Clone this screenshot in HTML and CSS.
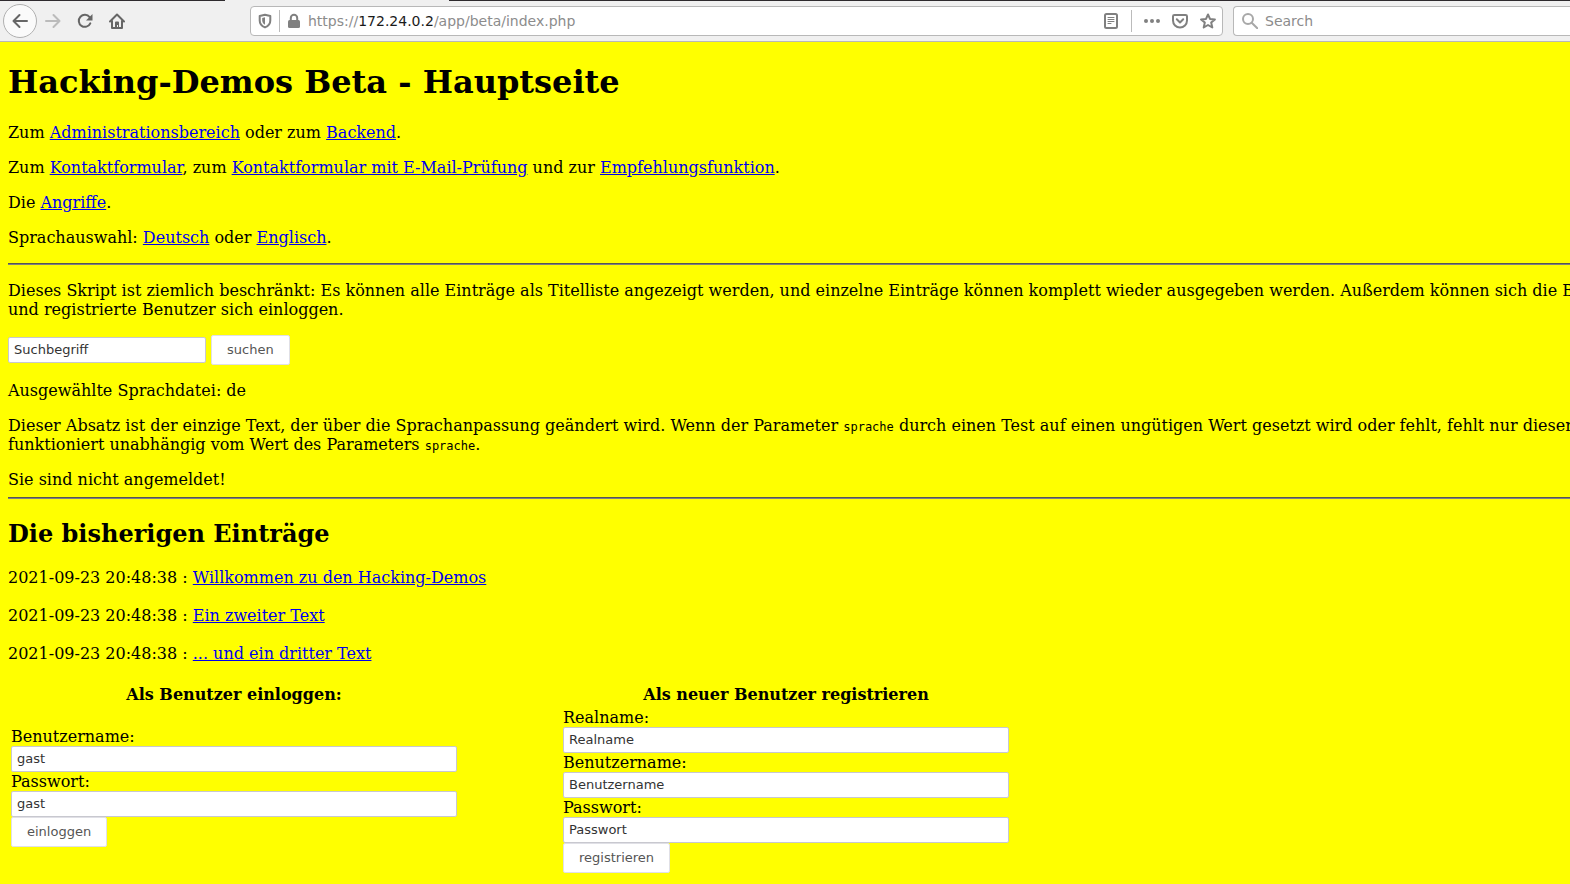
FILE: index.html
```html
<!DOCTYPE html>
<html lang="de">
<head>
<meta charset="utf-8">
<title>Hacking-Demos Beta - Hauptseite</title>
<link rel="stylesheet" href="styles.css">
</head>
<body>
<header class="browser">
  <div class="tabstrip"><span class="tabstrip-left"></span><span class="tabstrip-right"></span></div>
  <div class="toolbar">
    <nav class="nav">
      <button class="nav-button back" type="button" aria-label="Back"><svg viewBox="0 0 16 16"><path d="M15 8H1.500M7.500 2L1.500 8l6 6"/></svg></button>
      <button class="nav-button forward" type="button" aria-label="Forward"><svg viewBox="0 0 16 16"><path d="M1 8h13.500M8.500 2l6 6-6 6"/></svg></button>
      <button class="nav-button" type="button" aria-label="Reload"><svg viewBox="0 0 16 16"><path d="M13.300 10.300A6 6 0 1 1 12.600 4.200"/><path class="solid" d="M15.500 1v6.500H9z"/></svg></button>
      <button class="nav-button" type="button" aria-label="Home"><svg viewBox="0 0 16 16"><path d="M1 8.500L8 1.500l7 7M3 8v7h10V8"/><path class="solid" d="M6 15V9.500a1 1 0 0 1 1-1h2a1 1 0 0 1 1 1V15H9v-3H8v3z"/></svg></button>
    </nav>
    <div class="urlbar">
      <svg class="icon shield" viewBox="0 0 16 16"><path d="M8 1.800l5.300 1.200v4.500c0 3.200-2.300 5.800-5.300 6.900-3-1.100-5.300-3.700-5.300-6.900V3z"/><path class="solid" d="M8 4.300v7.500C6.300 10.800 5.200 9.300 5.200 7.300V4.900z"/></svg>
      <span class="separator"></span>
      <svg class="icon" viewBox="0 0 16 16"><path d="M4.800 8V5a3.200 3.200 0 0 1 6.400 0v3"/><rect class="solid" x="2" y="7" width="12" height="8" rx="1.500"/></svg>
      <span class="url">https://<span class="host">172.24.0.2</span>/app/beta/index.php</span>
      <svg class="icon" viewBox="0 0 16 16"><rect x="2" y="1" width="12" height="14" rx="1.500"/><path class="thin" d="M5 4.500h6M5 6.500h6M5 8.500h6M5 10.500h3"/></svg>
      <span class="separator wide"></span>
      <svg class="icon" viewBox="0 0 16 16"><circle class="solid" cx="2" cy="8" r="2"/><circle class="solid" cx="8" cy="8" r="2"/><circle class="solid" cx="14" cy="8" r="2"/></svg>
      <svg class="icon" viewBox="0 0 16 16"><path d="M2.500 2h11c.800 0 1.500.500 1.500 1.300V7.500a7 7 0 0 1-14 0V3.300C1 2.500 1.700 2 2.500 2z"/><path d="M4.800 6.300L8 9.500l3.200-3.200"/></svg>
      <svg class="icon" viewBox="0 0 16 16"><path d="M8 1.500l2 4.400 4.900.500-3.700 3.200 1.100 4.900L8 12l-4.300 2.500 1.100-4.900L1.100 6.400 6 5.900z"/></svg>
    </div>
    <div class="searchbar">
      <svg class="icon pale" viewBox="0 0 16 16"><circle cx="6" cy="6" r="5"/><path d="M9.700 9.700l5.600 5.600"/></svg>
      <input class="search-input" type="text" placeholder="Search" aria-label="Search">
    </div>
  </div>
</header>
<main class="page">
  <h1>Hacking-Demos Beta - Hauptseite</h1>
  <p>Zum <a href="#">Administrationsbereich</a> oder zum <a href="#">Backend</a>.</p>
  <p>Zum <a href="#">Kontaktformular</a>, zum <a href="#">Kontaktformular mit E-Mail-Prüfung</a> und zur <a href="#">Empfehlungsfunktion</a>.</p>
  <p>Die <a href="#">Angriffe</a>.</p>
  <p>Sprachauswahl: <a href="#">Deutsch</a> oder <a href="#">Englisch</a>.</p>
  <hr>
  <p>Dieses Skript ist ziemlich beschränkt: Es können alle Einträge als Titelliste angezeigt werden, und einzelne Einträge können komplett wieder ausgegeben werden. Außerdem können sich die Benutzer<br>und registrierte Benutzer sich einloggen.</p>
  <form class="search-form">
    <input class="field short" type="text" value="Suchbegriff" aria-label="Suchbegriff">
    <button class="submit" type="button">suchen</button>
  </form>
  <p>Ausgewählte Sprachdatei: de</p>
  <p>Dieser Absatz ist der einzige Text, der über die Sprachanpassung geändert wird. Wenn der Parameter <code>sprache</code> durch einen Test auf einen ungütigen Wert gesetzt wird oder fehlt, fehlt nur dieser<br>funktioniert unabhängig vom Wert des Parameters <code>sprache</code>.</p>
  <div>Sie sind nicht angemeldet!</div>
  <hr>
  <h2>Die bisherigen Einträge</h2>
  <div class="entries">
    <div>2021-09-23 20:48:38 : <a href="#">Willkommen zu den Hacking-Demos</a></div>
    <div>2021-09-23 20:48:38 : <a href="#">Ein zweiter Text</a></div>
    <div>2021-09-23 20:48:38 : <a href="#">... und ein dritter Text</a></div>
  </div>
  <div class="accounts">
    <form class="account login">
      <h3>Als Benutzer einloggen:</h3>
      <label for="login-name">Benutzername:</label>
      <input class="field" id="login-name" type="text" value="gast">
      <label for="login-pass">Passwort:</label>
      <input class="field" id="login-pass" type="text" value="gast">
      <button class="submit" type="button">einloggen</button>
    </form>
    <form class="account">
      <h3>Als neuer Benutzer registrieren</h3>
      <label for="reg-real">Realname:</label>
      <input class="field" id="reg-real" type="text" value="Realname">
      <label for="reg-name">Benutzername:</label>
      <input class="field" id="reg-name" type="text" value="Benutzername">
      <label for="reg-pass">Passwort:</label>
      <input class="field" id="reg-pass" type="text" value="Passwort">
      <button class="submit" type="button">registrieren</button>
    </form>
  </div>
</main>
</body>
</html>
```

FILE: styles.css
```css
* { box-sizing: border-box; }
html { background: #ffff00; }
body { margin: 0; overflow-x: hidden; color: #000; font: 16px/19px "DejaVu Serif", serif; }

/* Browser chrome */
.browser { background: #f0f0f0; border-bottom: 1px solid #b8b8b8; font-family: "DejaVu Sans", sans-serif; }
.tabstrip { display: flex; justify-content: space-between; height: 1px; }
.tabstrip-left { width: 225px; background: #2e2a2e; }
.tabstrip-right { width: calc(100% - 449px); background: #2e2a2e; }
.toolbar { display: flex; align-items: center; height: 40px; padding-left: 3px; }
.nav { display: flex; align-items: center; width: 247px; flex: none; }
.nav-button { display: flex; align-items: center; justify-content: center; width: 32px; height: 34px; padding: 0; border: 0; background: none; color: #666; }
.back { width: 34px; border: 1px solid #b0b0b0; border-radius: 50%; background: #fafafa; }
.forward { color: #bbb; }
svg { width: 16px; height: 16px; flex: none; fill: none; stroke: currentColor; stroke-width: 2; stroke-linejoin: round; stroke-linecap: round; }
.solid { fill: currentColor; stroke: none; }
.thin { stroke-width: 1; }
.icon { color: #808080; }
.pale { color: #a8a8a8; }
.urlbar, .searchbar { display: flex; align-items: center; height: 30px; background: #fff; border: 1px solid #b8b8b8; border-radius: 4px; font-size: 14px; }
.urlbar { flex: 1; min-width: 0; padding-left: 6px; }
.urlbar .icon { margin: 0 6px; }
.urlbar .shield { margin-left: 0; }
.separator { width: 1px; height: 22px; background: #bbb; }
.wide { margin: 0 6px; }
.url { flex: 1; min-width: 0; overflow: hidden; white-space: nowrap; color: #8c8c8c; }
.host { color: #1a1a1a; }
.searchbar { flex: none; width: 337px; margin-left: 10px; padding-left: 8px; border-right: 0; border-radius: 4px 0 0 4px; }
.search-input { flex: 1; min-width: 0; margin-left: 7px; padding: 0; border: 0; outline: 0; font: inherit; background: none; }
.search-input::placeholder { color: #8c8c8c; opacity: 1; }

/* Page */
.page { display: flow-root; padding: 0 0 10px 8px; white-space: nowrap; }
h1 { margin: 21px 0 22px; font-size: 32px; line-height: 38px; }
h2 { margin: 21px 0 20px; font-size: 24px; line-height: 28px; }
h3 { margin: 0 0 4px; font-size: 16px; line-height: 19px; text-align: center; }
p { margin: 16px 0; }
a { color: #0000ee; }
code { font: 12px "DejaVu Sans Mono", monospace; line-height: 1; }
hr { height: 2px; margin: 8px 0; border: 1px solid #808080; border-top-color: #555; border-width: 1px 0; }
.field { display: block; width: 100%; height: 26px; padding: 0 5px 2px; border: 1px solid #c8c8cf; border-radius: 2px; background: #fff; color: #333; font: 13px "DejaVu Sans", sans-serif; }
.short { width: 198px; }
.submit { height: 30px; padding: 0 15px 2px; border: 1px solid #e0e0e6; border-radius: 2px; background: #fff; color: #555; font: 13px "DejaVu Sans", sans-serif; }
.search-form { display: flex; align-items: center; gap: 5px; }
.entries { display: grid; gap: 19px; }
.accounts { display: flex; gap: 106px; margin: 22px 0 0 3px; }
.account { width: 446px; }
.account label { display: block; }
.account .submit { display: block; }
.login h3 { margin-bottom: 23px; }
```
